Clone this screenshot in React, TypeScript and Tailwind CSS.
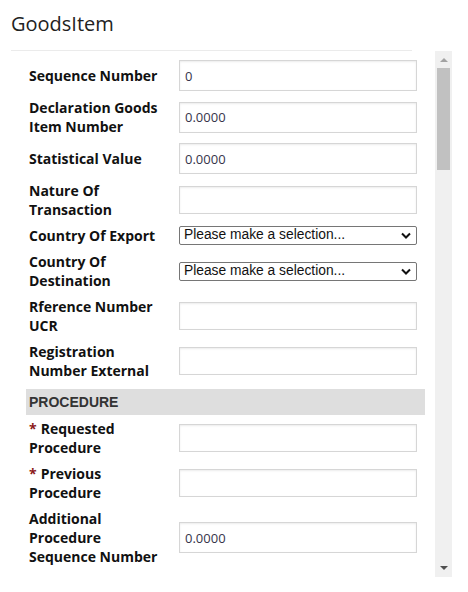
import React from "react";

type Field =
  | { kind: "input"; label: string; value?: string; required?: boolean }
  | { kind: "select"; label: string }
  | { kind: "section"; label: string };

const FIELDS: Field[] = [
  { kind: "input", label: "Sequence Number", value: "0" },
  { kind: "input", label: "Declaration Goods Item Number", value: "0.0000" },
  { kind: "input", label: "Statistical Value", value: "0.0000" },
  { kind: "input", label: "Nature Of Transaction" },
  { kind: "select", label: "Country Of Export" },
  { kind: "select", label: "Country Of Destination" },
  { kind: "input", label: "Rference Number UCR" },
  { kind: "input", label: "Registration Number External" },
  { kind: "section", label: "PROCEDURE" },
  { kind: "input", label: "Requested Procedure", required: true },
  { kind: "input", label: "Previous Procedure", required: true },
  { kind: "input", label: "Additional Procedure Sequence Number", value: "0.0000" },
];

function Label({ text, required }: { text: string; required?: boolean }) {
  return (
    <div className="w-[150px] shrink-0 pr-[8px] text-[14px] font-bold leading-[19px] text-[#111]">
      {required && <span className="mr-[4px] text-[#8b1a1a]">*</span>}
      {text}
    </div>
  );
}

function TextBox({ value }: { value?: string }) {
  return (
    <input
      readOnly
      value={value ?? ""}
      className={`w-[238px] border border-[#d6d6d6] bg-white px-[5px] text-[13px] text-[#36344a] shadow-[inset_0_1px_2px_rgba(0,0,0,0.08)] outline-none ${
        value ? "h-[31px]" : "h-[28px]"
      }`}
    />
  );
}

function SelectBox() {
  return (
    <div className="flex h-[19px] w-[238px] items-center justify-between rounded-[2px] border border-[#767676] bg-white pl-[4px] pr-[5px] text-[13.8px] text-[#111] [font-family:'Liberation_Sans',Arial,sans-serif]">
      <span>Please make a selection...</span>
      <svg width="10" height="7" viewBox="0 0 10 7" fill="none">
        <path d="M1 1.5 L5 5.5 L9 1.5" stroke="#111" strokeWidth="2" />
      </svg>
    </div>
  );
}

function Scrollbar() {
  return (
    <div className="flex h-[526px] w-[17px] shrink-0 flex-col items-center bg-[#f0f0f0]">
      <div className="flex h-[17px] w-full items-center justify-center">
        <svg width="8" height="5" viewBox="0 0 8 5">
          <path d="M0 5 L4 1 L8 5 Z" fill="#a3a3a3" />
        </svg>
      </div>
      <div className="h-[102px] w-[13px] bg-[#c1c1c1]" />
      <div className="flex-1" />
      <div className="flex h-[17px] w-full items-center justify-center">
        <svg width="8" height="5" viewBox="0 0 8 5">
          <path d="M0 0 L4 4 L8 0 Z" fill="#505050" />
        </svg>
      </div>
    </div>
  );
}

export default function App() {
  return (
    <div className="h-[592px] w-[468px] bg-white [font-family:'Open_Sans',sans-serif]">
      <div className="pl-[11px] pt-[10px]">
        <h1 className="text-[20px] leading-[27px] font-normal text-[#222]">GoodsItem</h1>
        <div className="mt-[13px] w-[401px] border-t border-[#ebebeb]" />
      </div>

      <div className="flex pl-[26px]">
        <div className="h-[526px] w-[399px] overflow-hidden pt-[9px]">
          <div className="flex flex-col gap-[7px]">
            {FIELDS.map((f) =>
              f.kind === "section" ? (
                <div
                  key={f.label}
                  className="mt-[2px] -mb-[3px] flex h-[26px] items-center bg-[#dedede] pl-[3px] text-[14px] font-bold text-[#333] [font-family:'Liberation_Sans',Arial,sans-serif]"
                >
                  {f.label}
                </div>
              ) : (
                <div key={f.label} className="flex items-center pl-[3px]">
                  <Label text={f.label} required={f.kind === "input" && f.required} />
                  {f.kind === "select" ? <SelectBox /> : <TextBox value={f.value} />}
                </div>
              )
            )}
          </div>
        </div>
        <div className="w-[10px]" />
        <Scrollbar />
      </div>
    </div>
  );
}
